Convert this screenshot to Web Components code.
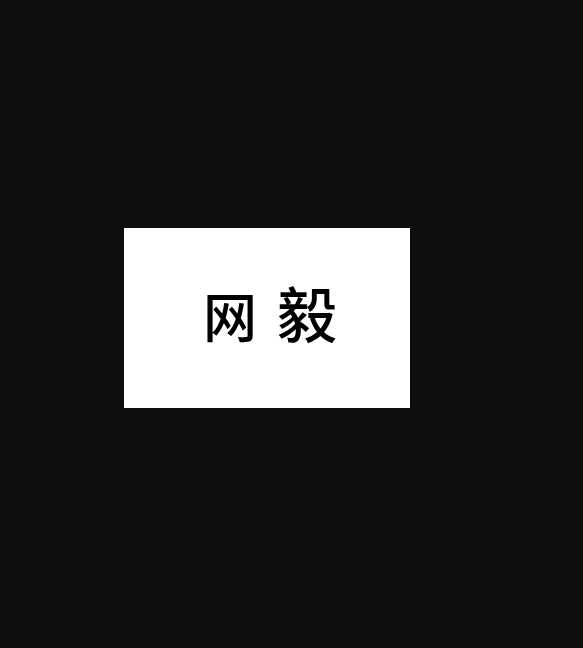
<!DOCTYPE html>
<html lang="zh">
<head>
<meta charset="utf-8">
<title>网易</title>
<style>
  html, body { margin: 0; background: #0e0e0e; }
</style>
</head>
<body>
<image-viewer>
  <brand-card>
    <span slot="first">网</span>
    <span slot="second">毅</span>
  </brand-card>
</image-viewer>

<script>
class ImageViewer extends HTMLElement {
  constructor() {
    super();
    this._shadowRoot = this.attachShadow({ mode: 'open' });
    this._shadowRoot.innerHTML = `
      <style>
        :host {
          display: block;
          box-sizing: border-box;
          width: 583px;
          height: 648px;
          padding: 228px 0 0 124px;
          background: #0e0e0e;
        }
      </style>
      <slot></slot>
    `;
  }
}

class BrandCard extends HTMLElement {
  constructor() {
    super();
    this._shadowRoot = this.attachShadow({ mode: 'open' });
    this._shadowRoot.innerHTML = `
      <style>
        :host {
          display: block;
          box-sizing: border-box;
          width: 286px;
          height: 180px;
          padding: 50px 0 0 79px;
          background: #fff;
          color: #000;
          font-family: "Noto Sans CJK SC", "Noto Sans CJK TC", sans-serif;
          font-weight: 500;
        }
        .mark {
          display: flex;
          align-items: center;
          gap: 20px;
          line-height: 68px;
        }
        .first { font-size: 54px; }
        .second { font-size: 60px; margin-bottom: 6px; }
      </style>
      <div class="mark">
        <div class="first"><slot name="first"></slot></div>
        <div class="second"><slot name="second"></slot></div>
      </div>
    `;
  }
}

if (!customElements.get('image-viewer')) {
  customElements.define('image-viewer', ImageViewer);
}
if (!customElements.get('brand-card')) {
  customElements.define('brand-card', BrandCard);
}
</script>
</body>
</html>
